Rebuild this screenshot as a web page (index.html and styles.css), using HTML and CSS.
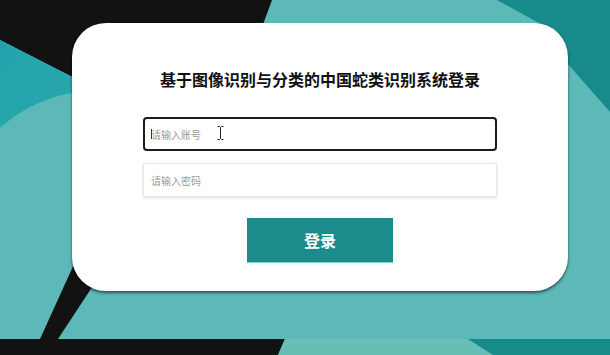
FILE: index.html
```html
<!DOCTYPE html>
<html lang="zh">
<head>
<meta charset="utf-8">
<title>登录</title>
<link rel="stylesheet" href="styles.css">
</head>
<body>
<div class="bg">
  <svg class="bg-art" width="610" height="355" viewBox="0 0 610 355">
    <defs>
      <linearGradient id="lt" x1="0" y1="0" x2="1" y2="1">
        <stop offset="0" stop-color="#22a3ab"/>
        <stop offset="1" stop-color="#2aa9ad"/>
      </linearGradient>
    </defs>
    <rect width="610" height="355" fill="#5cb9b8"/>
    <polygon points="0,0 272,0 250,60 90,86 0,40" fill="#121212"/>
    <path d="M0,40 L90,86 L90,90 Q35,96 0,128 Z" fill="url(#lt)"/>
    <polygon points="497,0 610,0 610,112 560,55 548,28" fill="#178b8b"/>
    <polygon points="40,339 58,339 123,240 85,240" fill="#121212"/>
    <polygon points="0,339 285,339 278,355 0,355" fill="#121212"/>
    <polygon points="285,339 468,339 493,355 278,355" fill="#67beb5"/>
    <polygon points="468,339 610,339 610,355 493,355" fill="#178a8a"/>
  </svg>
</div>
<main class="card">
  <h1 class="title">基于图像识别与分类的中国蛇类识别系统登录</h1>
  <form class="form">
    <div class="field">
      <input class="input input-focus" type="text" placeholder="请输入账号">
      <span class="caret"></span>
      <svg class="ibeam" width="7" height="14" viewBox="0 0 7 14"><path d="M0.5 0.5h2l1 1 1-1h2M3.5 1.5v11M0.5 13.5h2l1-1 1 1h2" fill="none" stroke="#222" stroke-width="1"/></svg>
    </div>
    <input class="input input-second" type="password" placeholder="请输入密码">
    <button class="btn" type="button">登录</button>
  </form>
</main>
</body>
</html>
```
FILE: styles.css
```css
html, body {
  margin: 0;
  padding: 0;
}
body {
  width: 610px;
  height: 355px;
  overflow: hidden;
  position: relative;
  background: #5cb9b8;
  font-family: "Noto Sans CJK SC", "Noto Sans", sans-serif;
}
.bg {
  position: absolute;
  inset: 0;
}
.bg-art {
  display: block;
}
.card {
  position: relative;
  margin: 23px 0 0 72px;
  width: 496px;
  height: 268px;
  box-sizing: border-box;
  padding-top: 46px;
  background: #fff;
  border-radius: 34px;
  box-shadow: 0 2px 3px rgba(0, 0, 0, 0.55);
  display: flex;
  flex-direction: column;
  align-items: center;
}
.title {
  margin: 0;
  font-size: 16px;
  line-height: 20px;
  font-weight: 700;
  color: #111;
}
.form {
  margin: 28px 0 0;
  width: 354px;
  display: flex;
  flex-direction: column;
  align-items: center;
}
.field {
  position: relative;
  width: 100%;
}
.input {
  display: block;
  width: 354px;
  height: 34px;
  box-sizing: border-box;
  margin: 0;
  padding: 0 7px;
  border: 1px solid #e8e8e8;
  border-radius: 2px;
  background: #fff;
  box-shadow: 0 1px 3px rgba(0, 0, 0, 0.12);
  font-family: "Noto Sans CJK SC", sans-serif;
  font-size: 10px;
  color: #333;
  outline: none;
}
.input::placeholder {
  color: #9a9a9a;
}
.input-focus {
  border: 2px solid #1c1c1c;
  border-radius: 4px;
  padding-left: 6px;
  box-shadow: none;
}
.input-second {
  margin-top: 12px;
}
.caret {
  position: absolute;
  left: 8px;
  top: 12px;
  width: 1px;
  height: 10px;
  background: #333;
}
.ibeam {
  position: absolute;
  left: 74px;
  top: 9px;
}
.btn {
  margin-top: 21px;
  width: 146px;
  height: 44px;
  border: none;
  border-radius: 0;
  background: #1b8b8c;
  box-shadow: 0 1px 0 #7dd9d6;
  color: #fff;
  font-family: "Noto Sans CJK SC", sans-serif;
  font-size: 16px;
  font-weight: 700;
  cursor: pointer;
}
```
